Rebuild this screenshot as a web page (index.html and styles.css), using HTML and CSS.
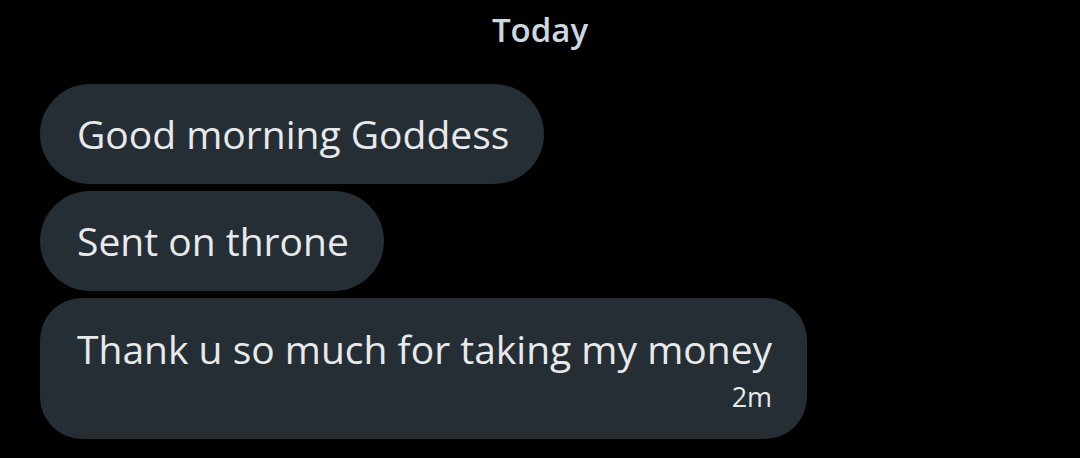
FILE: index.html
```html
<!DOCTYPE html>
<html lang="en">
<head>
  <meta charset="UTF-8">
  <meta name="viewport" content="width=device-width, initial-scale=1.0">
  <title>Messages</title>
  <link rel="stylesheet" href="styles.css">
</head>
<body>
  <div class="chat">
    <div class="day">Today</div>
    <div class="messages">
      <div class="bubble">Good morning Goddess</div>
      <div class="bubble">Sent on throne</div>
      <div class="bubble last">
        <span class="text">Thank u so much for taking my money</span>
        <span class="time">2m</span>
      </div>
    </div>
  </div>
</body>
</html>
```

FILE: styles.css
```css
body {
  margin: 0;
  background-color: #000;
  font-family: "Open Sans", Roboto, sans-serif;
  height: 458px;
  overflow: hidden;
}

.chat {
  display: flex;
  flex-direction: column;
  padding: 10px 0 0 40px;
}

.day {
  text-align: center;
  margin-left: -40px;
  color: #cdd7de;
  font-size: 33px;
  font-weight: 600;
  line-height: 40px;
}

.messages {
  display: flex;
  flex-direction: column;
  align-items: flex-start;
  gap: 7px;
  margin-top: 34px;
}

.bubble {
  background-color: #252e35;
  color: #e7e9ea;
  font-size: 39px;
  line-height: 100px;
  height: 100px;
  padding: 0 35px 0 37px;
  border-radius: 50px;
  white-space: nowrap;
}

.bubble.last {
  display: flex;
  flex-direction: column;
  align-items: flex-end;
  height: auto;
  line-height: 52px;
  padding: 25px 35px 21px 37px;
  border-radius: 42px;
}

.time {
  font-size: 27px;
  line-height: 43px;
}
```
